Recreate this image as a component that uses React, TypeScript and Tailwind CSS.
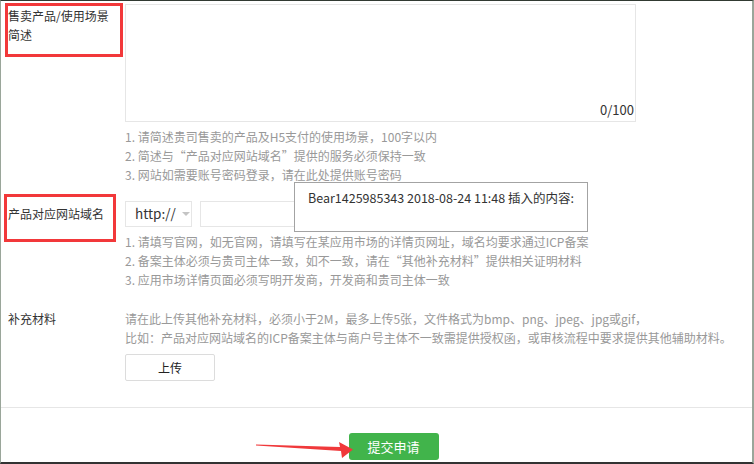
import React from 'react';

const font = { fontFamily: '"Noto Sans CJK SC", "Noto Sans", sans-serif' };

function Help({ lines }: { lines: string[] }) {
  return (
    <div className="text-[12px] leading-[19px] text-[#999]">
      {lines.map((l) => (
        <p key={l} className="whitespace-nowrap">
          {l}
        </p>
      ))}
    </div>
  );
}

export default function App() {
  return (
    <div
      style={font}
      className="relative w-[754px] h-[464px] overflow-hidden bg-white border-t border-t-[#313a32] border-l border-l-[#9aa69a] border-r-2 border-r-[#9aa69a] border-b-2 border-b-[#333] text-[#333]"
    >
      {/* 售卖产品 */}
      <div className="flex pt-[3px]">
        <div className="w-[124px] shrink-0 pl-[7px] pt-[2px] text-[12px] leading-[19px]">
          <p>售卖产品/使用场景</p>
          <p>简述</p>
        </div>
        <div>
          <div className="relative w-[511px] h-[118px] border border-[#e6e6e6]">
            <span className="absolute right-[1px] bottom-[2px] text-[13px] leading-[18px]">0/100</span>
          </div>
          <div className="mt-[5px]">
            <Help
              lines={[
                '1. 请简述贵司售卖的产品及H5支付的使用场景，100字以内',
                '2. 简述与“产品对应网站域名”提供的服务必须保持一致',
                '3. 网站如需要账号密码登录，请在此处提供账号密码',
              ]}
            />
          </div>
        </div>
      </div>

      {/* 网站域名 */}
      <div className="flex mt-[17px]">
        <div className="w-[124px] shrink-0 pl-[7px] text-[12px] leading-[26px]">产品对应网站域名</div>
        <div>
          <div className="relative flex gap-[8px]">
            <div className="flex items-center w-[67px] h-[26px] border border-[#e6e6e6] pl-[9px] gap-[6px]">
              <span className="text-[13.5px] font-normal leading-none text-[#333]">http://</span>
              <span className="w-0 h-0 border-l-[4px] border-r-[4px] border-t-[4px] border-l-transparent border-r-transparent border-t-[#c4c4c4]"></span>
            </div>
            <div className="w-[320px] h-[26px] border border-[#e6e6e6]"></div>
            <div className="absolute left-[169px] top-[-19px] w-[294px] h-[50px] bg-white border border-[#a3a3a3] pl-[13px] pt-[5px] text-[12.5px] leading-[19px] text-[#333] whitespace-nowrap">
              Bear1425985343 2018-08-24 11:48 插入的内容:
            </div>
          </div>
          <div className="mt-[5px]">
            <Help
              lines={[
                '1. 请填写官网，如无官网，请填写在某应用市场的详情页网址，域名均要求通过ICP备案',
                '2. 备案主体必须与贵司主体一致，如不一致，请在“其他补充材料”提供相关证明材料',
                '3. 应用市场详情页面必须写明开发商，开发商和贵司主体一致',
              ]}
            />
          </div>
        </div>
      </div>

      {/* 补充材料 */}
      <div className="flex mt-[20px]">
        <div className="w-[124px] shrink-0 pl-[7px] text-[12px] leading-[19px]">补充材料</div>
        <div>
          <Help
            lines={[
              '请在此上传其他补充材料，必须小于2M，最多上传5张，文件格式为bmp、png、jpeg、jpg或gif，',
              '比如：产品对应网站域名的ICP备案主体与商户号主体不一致需提供授权函，或审核流程中要求提供其他辅助材料。',
            ]}
          />
          <button className="mt-[7px] w-[90px] h-[27px] border border-[#dcdcdc] rounded-[2px] bg-white text-[12px] text-[#222]">
            上传
          </button>
        </div>
      </div>

      <div className="mt-[26px] border-t border-[#e6e6e6]"></div>

      <div className="flex justify-center pt-[25px] pl-[34px]">
        <button className="w-[90px] h-[27px] rounded-[3px] bg-[#41b44b] text-white text-[13px]">提交申请</button>
      </div>

      {/* annotations */}
      <div className="absolute left-[4px] top-[2px] w-[118px] h-[54px] border-[3px] border-[#f2383a]"></div>
      <div className="absolute left-[3px] top-[193px] w-[112px] h-[48px] border-[3px] border-[#f2383a]"></div>
      <svg className="absolute left-[253px] top-[437px]" width="102" height="24" viewBox="0 0 102 24">
        <polygon points="2,6.5 86,9 85,4 99,11.5 88,20 87,13 2,7.5" fill="#f0393b" />
      </svg>
    </div>
  );
}
